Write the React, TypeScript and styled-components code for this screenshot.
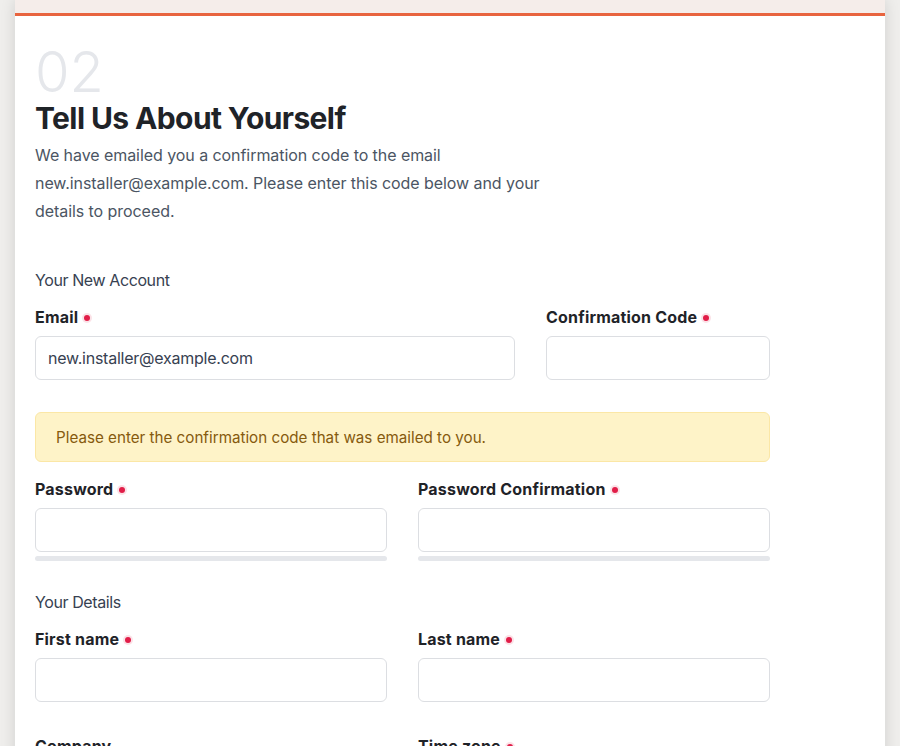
import styled, { createGlobalStyle } from "styled-components";

const GlobalStyle = createGlobalStyle`
  html, body {
    margin: 0;
    padding: 0;
    background: #efeeec;
    font-family: Inter, "Noto Sans", sans-serif;
    -webkit-font-smoothing: antialiased;
  }
  * { box-sizing: border-box; }
`;

const Page = styled.div`
  padding: 0 15px;
  min-height: 746px;
`;

const Card = styled.div`
  background: #ffffff;
  min-height: 746px;
  box-shadow: 0 0 14px rgba(0, 0, 0, 0.13);
`;

const TopBand = styled.div`
  height: 16px;
  background: #f5edea;
  border-bottom: 3px solid #e8643f;
`;

const Body = styled.div`
  padding: 28px 20px 40px;
`;

const StepNumber = styled.div`
  font-size: 56px;
  line-height: 56px;
  font-weight: 300;
  color: #e5e7eb;
`;

const Title = styled.h1`
  margin: 0;
  font-size: 30px;
  line-height: 36px;
  font-weight: 700;
  letter-spacing: -0.02em;
  color: #1f2328;
`;

const Intro = styled.p`
  margin: 5px 0 0;
  max-width: 540px;
  font-size: 16px;
  line-height: 28px;
  letter-spacing: -0.004em;
  color: #4b5563;
`;

const Form = styled.form`
  width: 735px;
  margin-top: 43px;
`;

const SectionTitle = styled.div`
  font-size: 16px;
  line-height: 24px;
  letter-spacing: -0.025em;
  color: #374151;
  margin-bottom: 13px;
`;

const Row = styled.div<{ $cols: string; $mb?: number }>`
  display: grid;
  grid-template-columns: ${(p) => p.$cols};
  column-gap: 31px;
  margin-bottom: ${(p) => p.$mb ?? 0}px;
`;

const Field = styled.div`
  display: flex;
  flex-direction: column;
`;

const Label = styled.label`
  display: flex;
  align-items: center;
  gap: 6px;
  font-size: 16px;
  line-height: 24px;
  font-weight: 700;
  letter-spacing: 0.012em;
  color: #1f2328;
  margin-bottom: 7px;
`;

const Required = styled.span`
  width: 6px;
  height: 6px;
  border-radius: 50%;
  background: #e11d48;
  box-shadow: 0 0 0 2px rgba(225, 29, 72, 0.13);
  margin-top: 2px;
`;

const Input = styled.input`
  height: 44px;
  width: 100%;
  border: 1px solid #dcdee2;
  border-radius: 6px;
  padding: 0 12px;
  font-family: inherit;
  font-size: 16px;
  letter-spacing: -0.015em;
  color: #374151;
  background: #fff;
  outline: none;
`;

const Strength = styled.div`
  height: 5px;
  margin-top: 4px;
  border-radius: 3px;
  background: #e5e7eb;
`;

const Notice = styled.div`
  margin: 32px 0 15px;
  height: 50px;
  display: flex;
  align-items: center;
  padding: 0 20px;
  background: #fef3c8;
  border: 1px solid #fbe7a6;
  border-radius: 6px;
  font-size: 15.2px;
  color: #865a0e;
`;

function LabeledInput({ label, value, strength }: { label: string; value?: string; strength?: boolean }) {
  return (
    <Field>
      <Label>
        {label}
        <Required />
      </Label>
      <Input defaultValue={value} />
      {strength && <Strength />}
    </Field>
  );
}

export default function App() {
  return (
    <>
      <GlobalStyle />
      <Page>
        <Card>
          <TopBand />
          <Body>
            <StepNumber>02</StepNumber>
            <Title>Tell Us About Yourself</Title>
            <Intro>
              We have emailed you a confirmation code to the email new.installer@example.com. Please enter this code
              below and your details to proceed.
            </Intro>
            <Form onSubmit={(e) => e.preventDefault()}>
              <SectionTitle>Your New Account</SectionTitle>
              <Row $cols="1fr 224px">
                <LabeledInput label="Email" value="new.installer@example.com" />
                <LabeledInput label="Confirmation Code" />
              </Row>
              <Notice>Please enter the confirmation code that was emailed to you.</Notice>
              <Row $cols="1fr 1fr" $mb={29}>
                <LabeledInput label="Password" strength />
                <LabeledInput label="Password Confirmation" strength />
              </Row>
              <SectionTitle>Your Details</SectionTitle>
              <Row $cols="1fr 1fr" $mb={32}>
                <LabeledInput label="First name" />
                <LabeledInput label="Last name" />
              </Row>
              <Row $cols="1fr 1fr">
                <Field>
                  <Label>Company</Label>
                  <Input />
                </Field>
                <LabeledInput label="Time zone" />
              </Row>
            </Form>
          </Body>
        </Card>
      </Page>
    </>
  );
}
